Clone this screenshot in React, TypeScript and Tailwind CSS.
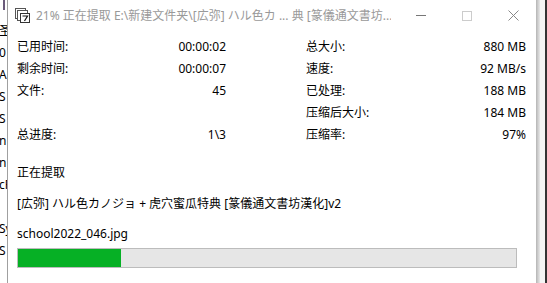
const font = { fontFamily: '"Segoe UI", "Noto Sans", "Noto Sans CJK SC", sans-serif' };

const leftRows = [
  ["已用时间:", "00:00:02"],
  ["剩余时间:", "00:00:07"],
  ["文件:", "45"],
  ["", ""],
  ["总进度:", "1\\3"],
];

const rightRows = [
  ["总大小:", "880 MB"],
  ["速度:", "92 MB/s"],
  ["已处理:", "188 MB"],
  ["压缩后大小:", "184 MB"],
  ["压缩率:", "97%"],
];

function ZipIcon() {
  return (
    <svg width="17" height="17" viewBox="0 0 17 17">
      <rect x="1.5" y="1.5" width="10" height="10" fill="#fff" stroke="#555" />
      <rect x="3.5" y="3.5" width="10" height="10" fill="#fff" stroke="#555" />
      <rect x="6.5" y="6.5" width="9" height="9" fill="#fff" stroke="#333" />
      <path d="M8.5 9h5l-3 5" fill="none" stroke="#111" strokeWidth="1.2" />
    </svg>
  );
}

export default function App() {
  const bgChars = ["圣", "0", "A", "S", "S", "n", "n", "cR", "", "Sy", "S"];
  return (
    <div className="flex h-[283px] w-[547px] overflow-hidden bg-white text-[12px] text-black" style={font}>
      <div className="relative w-[8px] shrink-0 overflow-hidden border-r border-[#a0a0a0] bg-white">
        <div className="absolute left-[3px] top-0 h-[10px] w-[2px] bg-[#6b5b7b]" />
        <div className="-ml-[1px] pt-[20px] text-[12px] leading-[22px]">
          {bgChars.map((c, i) => (
            <div key={i} className="h-[22px] whitespace-nowrap">{c}</div>
          ))}
        </div>
      </div>

      <div className="flex w-[528px] shrink-0 flex-col bg-white">
        <div className="flex h-[31px] items-center">
          <div className="ml-[6px] mr-[5px] flex shrink-0 items-center"><ZipIcon /></div>
          <div className="w-[355px] shrink-0 overflow-hidden whitespace-nowrap text-[12px] text-[#999]">
            21% 正在提取 E:\新建文件夹\[広弥] ハル色カ ... 典 [篆儀通文書坊...
          </div>
          <div className="ml-auto flex h-full shrink-0 items-center">
            <div className="flex h-full w-[46px] items-center justify-center">
              <div className="w-[10px] border-t border-[#777]" />
            </div>
            <div className="flex h-full w-[46px] items-center justify-center">
              <div className="h-[10px] w-[10px] border border-[#ccc]" />
            </div>
            <div className="flex h-full w-[46px] items-center justify-center">
              <svg width="11" height="11" viewBox="0 0 11 11">
                <path d="M0.5 0.5l10 10M10.5 0.5l-10 10" stroke="#888" strokeWidth="1" />
              </svg>
            </div>
          </div>
        </div>

        <div className="flex flex-col px-[9px] pt-[5px]">
          <div className="flex">
            <div className="w-[209px]">
              {leftRows.map(([k, v], i) => (
                <div key={i} className="flex h-[22px] items-center justify-between">
                  <span>{k}</span>
                  <span>{v}</span>
                </div>
              ))}
            </div>
            <div className="ml-[80px] w-[220px]">
              {rightRows.map(([k, v], i) => (
                <div key={i} className="flex h-[22px] items-center justify-between">
                  <span>{k}</span>
                  <span>{v}</span>
                </div>
              ))}
            </div>
          </div>

          <div className="mt-[16px] flex h-[22px] items-center">正在提取</div>
          <div className="mt-[9px] flex h-[22px] items-center whitespace-nowrap">
            [広弥] ハル色カノジョ + 虎穴蜜瓜特典 [篆儀通文書坊漢化]v2
          </div>
          <div className="mt-[8px] flex h-[22px] items-center">school2022_046.jpg</div>
          <div className="mt-[3px] h-[20px] w-[500px] border border-[#bcbcbc] bg-[#e6e6e6]">
            <div className="h-full w-[103px] bg-[#06b025]" />
          </div>
        </div>
      </div>

      <div className="flex flex-1">
        <div className="w-[4px] bg-gradient-to-r from-[#b5b5b5] to-[#e8e8e8]" />
        <div className="flex-1 bg-[#f4f4f4]" />
        <div className="w-[2px] bg-[#333]" />
      </div>
    </div>
  );
}
